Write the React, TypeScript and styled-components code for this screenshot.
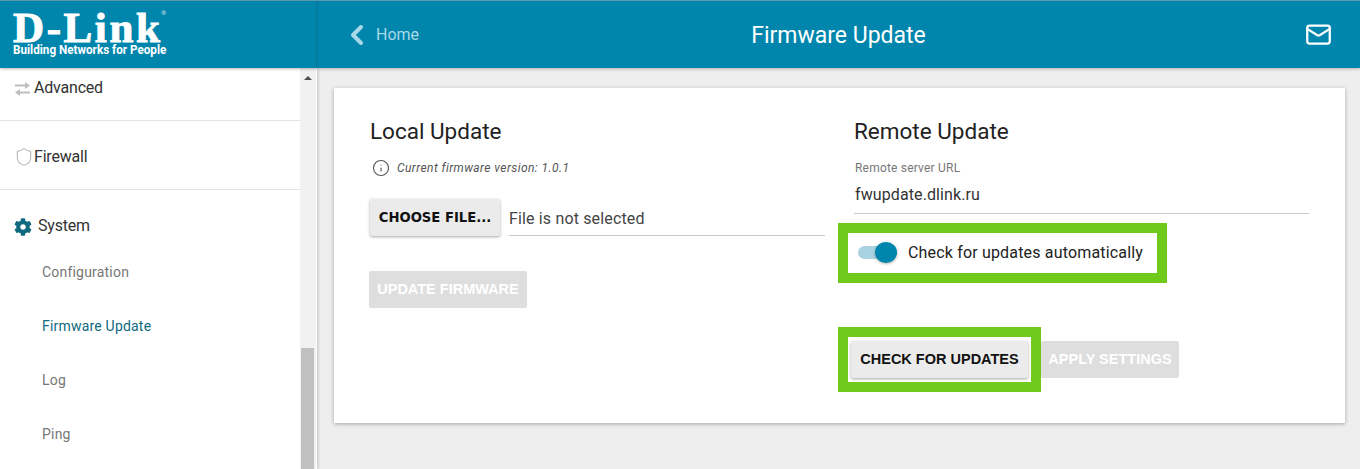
import React from 'react';
import styled, { createGlobalStyle } from 'styled-components';
import { ChevronLeft, Info, Mail, Shield } from 'lucide-react';
import { FaCog } from 'react-icons/fa';

const GlobalStyle = createGlobalStyle`
  html, body {
    margin: 0;
    padding: 0;
    height: 469px;
    overflow: hidden;
    background: #eeeeee;
    font-family: Roboto, "Liberation Sans", sans-serif;
  }
  * { box-sizing: border-box; }
`;

const Page = styled.div`
  width: 1360px;
  height: 469px;
  display: flex;
  flex-direction: column;
  overflow: hidden;
`;

const Header = styled.header`
  position: relative;
  z-index: 2;
  height: 68px;
  flex: none;
  display: flex;
  background: #0086ad;
  border-top: 1px solid #5c9db3;
  box-shadow: 0 1px 3px rgba(0, 0, 0, 0.25);
`;

const LogoBox = styled.div`
  width: 317px;
  flex: none;
  padding: 10px 0 0 13px;
  border-right: 1px solid #0a7898;
  box-shadow: 1px 0 2px rgba(0, 0, 0, 0.1);
  color: #fff;
`;

const LogoMark = styled.div`
  position: relative;
  width: 152px;
  height: 32px;
  font-family: "Liberation Serif", serif;
  font-weight: 700;
  font-size: 43px;
  line-height: 33px;
  letter-spacing: 2.6px;
  white-space: nowrap;
  -webkit-text-stroke: 1px #fff;
`;

const LogoReg = styled.span`
  position: absolute;
  top: -2px;
  right: -1px;
  font-family: "Liberation Sans", sans-serif;
  font-size: 6px;
  font-weight: 400;
  line-height: 8px;
  letter-spacing: 0;
  -webkit-text-stroke: 0;
`;

const LogoTag = styled.div`
  font-family: Roboto, sans-serif;
  font-weight: 700;
  font-size: 13.5px;
  line-height: 13px;
  white-space: nowrap;
  transform: scaleX(0.865);
  transform-origin: left center;
`;

const HeaderBar = styled.div`
  flex: 1;
  display: flex;
  align-items: center;
  justify-content: space-between;
  padding: 0 28px 0 28px;
  color: #fff;
`;

const HomeLink = styled.a`
  width: 120px;
  display: flex;
  align-items: center;
  gap: 3px;
  color: #a9d9e7;
  font-size: 16px;
`;

const PageTitle = styled.h1`
  margin: 1px 0 0;
  font-size: 23px;
  font-weight: 400;
  color: #fff;
`;

const MailButton = styled.div`
  width: 120px;
  display: flex;
  justify-content: flex-end;
  color: #fff;
`;

const Body = styled.div`
  flex: 1;
  display: flex;
  min-height: 0;
`;

const Sidebar = styled.aside`
  width: 317px;
  flex: none;
  display: flex;
  background: #fff;
  overflow: hidden;
  box-shadow: 1px 0 3px rgba(0, 0, 0, 0.2);
`;

const Nav = styled.nav`
  flex: 1;
  margin-top: -16px;
`;

const NavRow = styled.div`
  height: 69px;
  display: flex;
  align-items: center;
  padding: 2px 0 0 14px;
  border-bottom: 1px solid #e3e3e3;
  color: #333;
  font-size: 16px;
  letter-spacing: -0.2px;
`;

const NavIconSlot = styled.span`
  display: flex;
  width: 20px;
  justify-content: flex-start;
  color: #bdbdbd;
`;

const SystemRow = styled.div`
  height: 54px;
  display: flex;
  align-items: flex-start;
  gap: 6px;
  padding: 26px 0 0 14px;
  color: #333;
  font-size: 16px;
  line-height: 19px;
  letter-spacing: -0.2px;
`;

const SubItem = styled.div<{ $active?: boolean }>`
  height: 54px;
  display: flex;
  align-items: center;
  padding: 2px 0 0 42px;
  font-size: 14px;
  letter-spacing: 0.2px;
  color: ${(p) => (p.$active ? '#0f6a80' : '#777')};
`;

const ScrollTrack = styled.div`
  position: relative;
  width: 16px;
  margin-right: 1px;
  background: #f1f1f1;
`;

const ScrollArrow = styled.div`
  width: 0;
  height: 0;
  margin: 8px auto 0;
  border-left: 4px solid transparent;
  border-right: 4px solid transparent;
  border-bottom: 4px solid #505050;
`;

const ScrollThumb = styled.div`
  position: absolute;
  left: 1px;
  right: 2px;
  top: 280px;
  bottom: 0;
  background: #c0c0c0;
`;

const Main = styled.main`
  flex: 1;
  padding: 20px 15px 0 17px;
`;

const Card = styled.section`
  height: 335px;
  display: grid;
  grid-template-columns: 455px 455px;
  column-gap: 29px;
  padding: 29px 0 0 36px;
  background: #fff;
  box-shadow: 0 1px 4px rgba(0, 0, 0, 0.3);
`;

const Column = styled.div`
  display: flex;
  flex-direction: column;
  align-items: flex-start;
`;

const SectionTitle = styled.h2`
  margin: 0;
  font-size: 22.5px;
  line-height: 29px;
  font-weight: 400;
  color: #222;
`;

const VersionNote = styled.div`
  display: flex;
  align-items: center;
  gap: 7px;
  margin: 12px 0 0 2px;
  height: 20px;
  color: #555;
  font-size: 12px;
  font-style: italic;
  letter-spacing: 0.42px;
`;

const FileRow = styled.div`
  width: 455px;
  display: flex;
  gap: 9px;
  margin-top: 21px;
`;

const FileName = styled.div`
  flex: 1;
  height: 37px;
  display: flex;
  align-items: center;
  padding-top: 2px;
  border-bottom: 1px solid #c9c9c9;
  color: #444;
  font-size: 16px;
  letter-spacing: 0.15px;
`;

const Button = styled.button<{ $disabled?: boolean }>`
  height: 37px;
  padding: 0 0 2px;
  border: 0;
  border-radius: 2px;
  font-family: "Liberation Sans", sans-serif;
  font-weight: 700;
  font-size: 14.5px;
  white-space: nowrap;
  background: ${(p) => (p.$disabled ? '#dedede' : '#ebebeb')};
  color: ${(p) => (p.$disabled ? '#fff' : '#111')};
  box-shadow: ${(p) => (p.$disabled ? 'none' : '0 1px 3px rgba(0, 0, 0, 0.35)')};
`;

const ChooseButton = styled(Button)`
  width: 130px;
  flex: none;
  padding: 0;
  font-family: "DejaVu Sans", sans-serif;
  font-size: 13.2px;
`;

const UpdateButton = styled(Button)`
  width: 158px;
  margin: 35px 0 0 -1px;
`;

const FieldLabel = styled.label`
  margin: 14px 0 0 1px;
  height: 16px;
  font-size: 12px;
  line-height: 16px;
  color: #777;
  letter-spacing: 0.2px;
`;

const FieldValue = styled.div`
  width: 455px;
  height: 31px;
  display: flex;
  align-items: center;
  border-bottom: 1px solid #c9c9c9;
  margin-top: 7px;
  padding: 0 0 7px 1px;
  color: #333;
  font-size: 16px;
  letter-spacing: 0.1px;
`;

const Highlight = styled.div`
  border: 10px solid #6fca1c;
  background: #fff;
`;

const SwitchHighlight = styled(Highlight)`
  width: 329px;
  height: 60px;
  margin: 9px 0 0 -16px;
  display: flex;
  align-items: center;
  gap: 11px;
  padding: 0 0 1px 10px;
  color: #222;
  font-size: 16px;
  letter-spacing: 0.17px;
`;

const Track = styled.span`
  position: relative;
  width: 39px;
  height: 13px;
  flex: none;
  border-radius: 7px;
  background: #a9d3e1;
`;

const Thumb = styled.span`
  position: absolute;
  right: 0;
  top: -4px;
  width: 22px;
  height: 21px;
  border-radius: 50%;
  background: #0086ad;
  box-shadow: 0 1px 3px rgba(0, 0, 0, 0.3);
`;

const ActionRow = styled.div`
  display: flex;
  align-items: flex-start;
  margin: 44px 0 0 -16px;
`;

const ButtonHighlight = styled(Highlight)`
  width: 203px;
  height: 65px;
  padding: 4px 3px 0;
`;

const CheckButton = styled(Button)`
  width: 177px;
`;

const ApplyButton = styled(Button)`
  width: 138px;
  margin-top: 14px;
`;

const SwapIcon = () => (
  <svg width="15" height="14" viewBox="0 0 15 14" fill="#bdbdbd" style={{ margin: '4px 0 0 1px' }}>
    <path d="M0 2.500h10V0l5 3.500-5 3.500V4.500H0zM15 9.500H5V7l-5 3.500L5 14v-2.500h10z" />
  </svg>
);

const App: React.FC = () => {
  return (
    <Page>
      <GlobalStyle />
      <Header>
        <LogoBox>
          <LogoMark>
            D-Link
            <LogoReg>®</LogoReg>
          </LogoMark>
          <LogoTag>Building Networks for People</LogoTag>
        </LogoBox>
        <HeaderBar>
          <HomeLink>
            <ChevronLeft size={32} strokeWidth={3} color="#a9d9e7" style={{ marginLeft: -4 }} />
            Home
          </HomeLink>
          <PageTitle>Firmware Update</PageTitle>
          <MailButton>
            <Mail size={27} strokeWidth={2} />
          </MailButton>
        </HeaderBar>
      </Header>
      <Body>
        <Sidebar>
          <Nav>
            <NavRow>
              <NavIconSlot>
                <SwapIcon />
              </NavIconSlot>
              Advanced
            </NavRow>
            <NavRow>
              <NavIconSlot>
                <Shield size={20} strokeWidth={1.4} style={{ marginTop: 2 }} />
              </NavIconSlot>
              Firewall
            </NavRow>
            <SystemRow>
              <FaCog size={18} color="#0f6a80" style={{ marginTop: 2 }} />
              System
            </SystemRow>
            <SubItem>Configuration</SubItem>
            <SubItem $active>Firmware Update</SubItem>
            <SubItem>Log</SubItem>
            <SubItem>Ping</SubItem>
          </Nav>
          <ScrollTrack>
            <ScrollArrow />
            <ScrollThumb />
          </ScrollTrack>
        </Sidebar>
        <Main>
          <Card>
            <Column>
              <SectionTitle>Local Update</SectionTitle>
              <VersionNote>
                <Info size={18} strokeWidth={1.5} color="#555" />
                Current firmware version: 1.0.1
              </VersionNote>
              <FileRow>
                <ChooseButton>CHOOSE FILE...</ChooseButton>
                <FileName>File is not selected</FileName>
              </FileRow>
              <UpdateButton $disabled>UPDATE FIRMWARE</UpdateButton>
            </Column>
            <Column>
              <SectionTitle>Remote Update</SectionTitle>
              <FieldLabel>Remote server URL</FieldLabel>
              <FieldValue>fwupdate.dlink.ru</FieldValue>
              <SwitchHighlight>
                <Track>
                  <Thumb />
                </Track>
                Check for updates automatically
              </SwitchHighlight>
              <ActionRow>
                <ButtonHighlight>
                  <CheckButton>CHECK FOR UPDATES</CheckButton>
                </ButtonHighlight>
                <ApplyButton $disabled>APPLY SETTINGS</ApplyButton>
              </ActionRow>
            </Column>
          </Card>
        </Main>
      </Body>
    </Page>
  );
};

export default App;
